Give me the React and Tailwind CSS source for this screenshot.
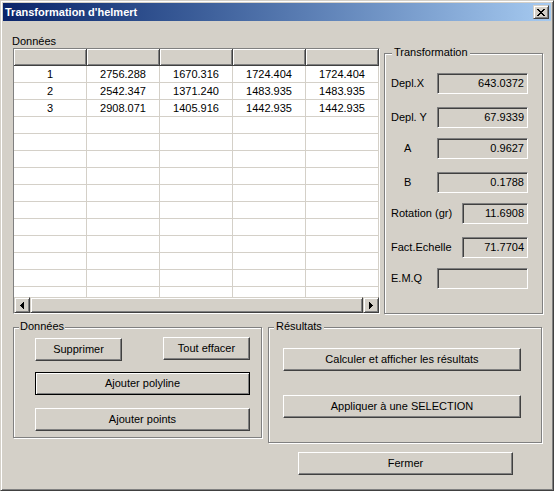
import React from "react";

const raised =
  "border border-t-white border-l-white border-r-[#404040] border-b-[#404040] shadow-[inset_-1px_-1px_0_#808080]";
const raisedDef =
  "border border-black shadow-[inset_1px_1px_0_#fff,inset_-1px_-1px_0_#808080]";
const raisedSb =
  "border border-t-[#d4d0c8] border-l-[#d4d0c8] border-r-[#404040] border-b-[#404040] shadow-[inset_1px_1px_0_#fff,inset_-1px_-1px_0_#808080]";
const sunken =
  "border border-t-[#808080] border-l-[#808080] border-r-white border-b-white shadow-[inset_1px_1px_0_#404040,inset_-1px_-1px_0_#d4d0c8]";
const group =
  "relative border border-[#808080] shadow-[1px_1px_0_#fff,inset_1px_1px_0_#fff]";

function Btn({ className = "", def = false, children }) {
  return (
    <div
      className={`flex items-center justify-center bg-[#d4d0c8] text-[11px] leading-[13px] text-black ${
        def ? raisedDef : raised
      } ${className}`}
    >
      {children}
    </div>
  );
}

function GroupLabel({ className = "", children }) {
  return (
    <div
      className={`absolute -top-[8px] bg-[#d4d0c8] text-[11px] leading-[13px] text-black ${className}`}
    >
      {children}
    </div>
  );
}

function Field({ className = "", value }) {
  return (
    <div
      className={`h-[21px] flex items-center justify-end pr-[3px] bg-[#d4d0c8] text-[11px] leading-[13px] text-black ${sunken} ${className}`}
    >
      {value}
    </div>
  );
}

const rows = [
  ["1", "2756.288", "1670.316", "1724.404", "1724.404"],
  ["2", "2542.347", "1371.240", "1483.935", "1483.935"],
  ["3", "2908.071", "1405.916", "1442.935", "1442.935"],
];

function CloseGlyph() {
  const px = [
    [0, 0], [1, 0], [6, 0], [7, 0],
    [1, 1], [2, 1], [5, 1], [6, 1],
    [2, 2], [3, 2], [4, 2], [5, 2],
    [3, 3], [4, 3],
    [2, 4], [3, 4], [4, 4], [5, 4],
    [1, 5], [2, 5], [5, 5], [6, 5],
    [0, 6], [1, 6], [6, 6], [7, 6],
  ];
  return (
    <svg width="8" height="7" viewBox="0 0 8 7" shapeRendering="crispEdges">
      {px.map(([x, y], i) => (
        <rect key={i} x={x} y={y} width="1" height="1" fill="#000" />
      ))}
    </svg>
  );
}

function ArrowLeft() {
  return (
    <svg width="4" height="7" viewBox="0 0 4 7" shapeRendering="crispEdges">
      <rect x="0" y="3" width="1" height="1" fill="#000" />
      <rect x="1" y="2" width="1" height="3" fill="#000" />
      <rect x="2" y="1" width="1" height="5" fill="#000" />
      <rect x="3" y="0" width="1" height="7" fill="#000" />
    </svg>
  );
}

function ArrowRight() {
  return (
    <svg width="4" height="7" viewBox="0 0 4 7" shapeRendering="crispEdges">
      <rect x="3" y="3" width="1" height="1" fill="#000" />
      <rect x="2" y="2" width="1" height="3" fill="#000" />
      <rect x="1" y="1" width="1" height="5" fill="#000" />
      <rect x="0" y="0" width="1" height="7" fill="#000" />
    </svg>
  );
}

function Grid() {
  const body = [];
  for (let r = 0; r < 14; r++) {
    const data = rows[r] || ["", "", "", "", ""];
    body.push(
      <div key={r} className="flex h-[17px] shrink-0">
        {data.map((c, i) => (
          <div
            key={i}
            className="w-[73px] shrink-0 h-full border-r border-b border-[#d4d0c8] bg-white text-center text-[11px] leading-[16px] text-black"
          >
            {c}
          </div>
        ))}
      </div>
    );
  }
  return (
    <div className={`w-[367px] h-[266px] flex flex-col overflow-hidden bg-white ${sunken} shadow-[inset_1px_1px_0_#404040,inset_-1px_-1px_0_#d4d0c8] border-[1px]`}>
      <div className="flex h-[17px] shrink-0 overflow-hidden">
        {[0, 1, 2, 3, 4].map((i) => (
          <div
            key={i}
            className="w-[73px] shrink-0 h-full bg-[#d4d0c8] border-r border-b border-r-[#404040] border-b-[#404040] shadow-[inset_1px_1px_0_#fff,inset_-1px_-1px_0_#808080]"
          />
        ))}
      </div>
      <div className="flex-1 flex flex-col overflow-hidden">{body}</div>
      <div className="h-[16px] shrink-0 flex bg-[#d4d0c8]">
        <div className={`w-[16px] h-[16px] flex items-center justify-center bg-[#d4d0c8] ${raisedSb}`}>
          <ArrowLeft />
        </div>
        <div className={`flex-1 h-[16px] bg-[#d4d0c8] ${raisedSb}`} />
        <div className={`w-[16px] h-[16px] flex items-center justify-center bg-[#d4d0c8] ${raisedSb}`}>
          <ArrowRight />
        </div>
      </div>
    </div>
  );
}

function TRow({ label, labelW, boxW, value, labelPad = "", mt = "" }) {
  return (
    <div className={`flex items-center h-[21px] ${mt}`}>
      <div className={`${labelW} ${labelPad} text-[11px] leading-[13px] text-black whitespace-nowrap`}>
        {label}
      </div>
      <Field className={boxW} value={value} />
    </div>
  );
}

export default function App() {
  return (
    <div className="w-[554px] h-[491px] bg-[#d4d0c8] font-['Liberation_Sans',Arial,sans-serif] border border-t-[#d4d0c8] border-l-[#d4d0c8] border-r-[#404040] border-b-[#404040] shadow-[inset_1px_1px_0_#fff,inset_-1px_-1px_0_#808080] p-[2px] flex flex-col overflow-hidden">
      <div className="h-[18px] shrink-0 flex items-center justify-between bg-linear-to-r from-[#0a246a] to-[#a6caf0] pl-[2px] pr-[2px]">
        <span className="text-white font-bold text-[11px] leading-[13px] mt-[1px]">
          Transformation d'helmert
        </span>
        <div className={`w-[16px] h-[14px] flex items-center justify-center bg-[#d4d0c8] ${raisedSb}`}>
          <CloseGlyph />
        </div>
      </div>

      <div className="flex flex-col pl-[10px] pt-[14px]">
        <div className="flex items-start gap-[4px]">
          <div className="flex flex-col">
            <div className="text-[11px] leading-[13px] text-black -ml-[1px]">Données</div>
            <Grid />
          </div>
          <div className={`${group} mt-[18px] w-[159px] h-[261px] pt-[19px] pl-[6px] flex flex-col`}>
            <GroupLabel className="left-[7px] px-[2px]">Transformation</GroupLabel>
            <TRow label="Depl.X" labelW="w-[46px]" boxW="w-[91px]" value="643.0372" />
            <TRow label="Depl. Y" labelW="w-[46px]" boxW="w-[91px]" value="67.9339" mt="mt-[13px]" />
            <TRow label="A" labelW="w-[46px]" labelPad="pl-[13px]" boxW="w-[91px]" value="0.9627" mt="mt-[10px]" />
            <TRow label="B" labelW="w-[46px]" labelPad="pl-[13px]" boxW="w-[91px]" value="0.1788" mt="mt-[13px]" />
            <TRow label="Rotation (gr)" labelW="w-[71px]" boxW="w-[66px]" value="11.6908" mt="mt-[10px]" />
            <TRow label="Fact.Echelle" labelW="w-[71px]" boxW="w-[66px]" value="71.7704" mt="mt-[13px]" />
            <TRow label="E.M.Q" labelW="w-[46px]" boxW="w-[91px]" value="" mt="mt-[10px]" />
          </div>
        </div>

        <div className="flex items-start gap-[6px] mt-[13px]">
          <div className={`${group} w-[249px] h-[111px] pl-[21px] pt-[9px] flex flex-col`}>
            <GroupLabel className="left-[5px] px-[1px]">Données</GroupLabel>
            <div className="flex items-start">
              <Btn className="w-[87px] h-[23px] mt-[1px]">Supprimer</Btn>
              <Btn className="w-[87px] h-[23px] ml-[41px]">Tout effacer</Btn>
            </div>
            <Btn def className="w-[215px] h-[23px] mt-[11px]">Ajouter polyline</Btn>
            <Btn className="w-[215px] h-[23px] mt-[13px]">Ajouter points</Btn>
          </div>
          <div className={`${group} w-[274px] h-[116px] pl-[14px] pt-[20px] flex flex-col`}>
            <GroupLabel className="left-[5px] px-[2px]">Résultats</GroupLabel>
            <Btn className="w-[238px] h-[23px]">Calculer et afficher les résultats</Btn>
            <Btn className="w-[238px] h-[23px] mt-[24px]">Appliquer à une SELECTION</Btn>
          </div>
        </div>

        <Btn className="w-[215px] h-[23px] mt-[9px] ml-[285px]">Fermer</Btn>
      </div>
    </div>
  );
}
